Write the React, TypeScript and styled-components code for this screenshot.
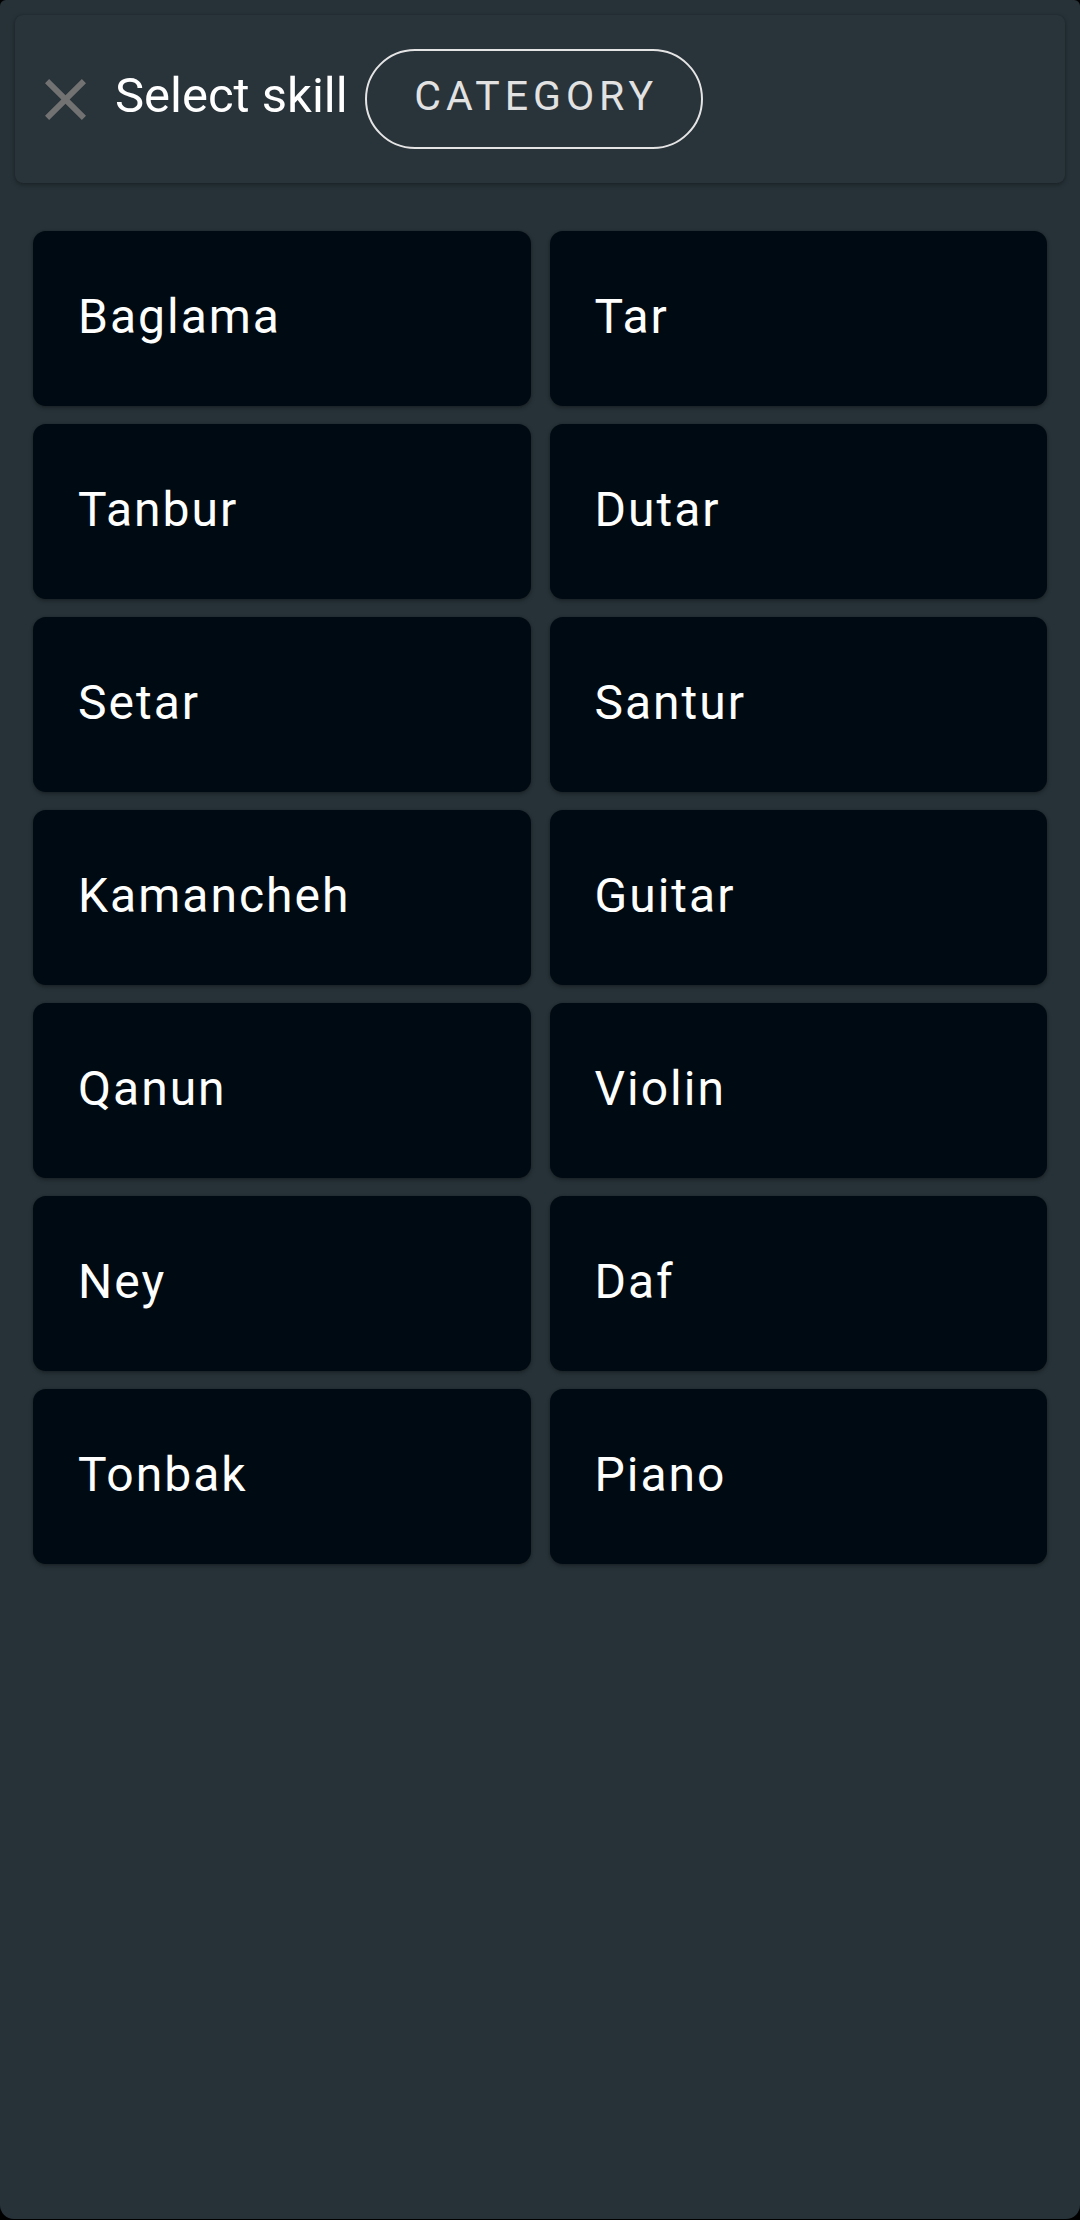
import React from "react";
import styled, { createGlobalStyle } from "styled-components";

const Global = createGlobalStyle`
  html, body { margin: 0; padding: 0; background: #000; }
  body { font-family: Roboto, "Noto Sans", "Liberation Sans", sans-serif; -webkit-font-smoothing: antialiased; }
  * { box-sizing: border-box; }
`;

const Screen = styled.div`
  width: 1080px;
  height: 2219px;
  background: #263238;
  border-radius: 6px 6px 14px 14px;
  overflow: hidden;
  display: flex;
  flex-direction: column;
`;

const Header = styled.header`
  margin: 15px 15px 0;
  height: 168px;
  background: #29333a;
  border-radius: 8px;
  box-shadow: 0 2px 5px rgba(0, 0, 0, 0.28), 0 0 2px rgba(0, 0, 0, 0.2);
  display: flex;
  align-items: center;
  padding-left: 30px;
`;

const CloseButton = styled.button`
  width: 41px;
  height: 41px;
  padding: 0;
  border: none;
  background: transparent;
  display: flex;
  align-items: center;
  justify-content: center;
  margin-right: 29px;
  cursor: pointer;
`;

const Title = styled.h1`
  margin: 0 17px 0 0;
  font-size: 49px;
  font-weight: 400;
  color: #ffffff;
  line-height: 1;
  position: relative;
  top: -4px;
`;

const CategoryButton = styled.button`
  width: 338px;
  height: 100px;
  border: 2px solid #e4e4e4;
  border-radius: 50px;
  background: transparent;
  color: #e2e2e2;
  font-family: Roboto, "Noto Sans", sans-serif;
  font-size: 41px;
  font-weight: 400;
  letter-spacing: 5px;
  display: flex;
  align-items: center;
  justify-content: center;
  padding: 0 0 6px 5px;
`;

const Grid = styled.div`
  margin: 48px 33px 0;
  display: grid;
  grid-template-columns: 1fr 1fr;
  column-gap: 19px;
  row-gap: 18px;
`;

const SkillCard = styled.button`
  height: 175px;
  background: #000a12;
  border: none;
  border-radius: 13px;
  box-shadow: 0 2px 4px rgba(0, 0, 0, 0.3), 0 0 2px rgba(0, 0, 0, 0.2);
  color: #ffffff;
  font-family: Roboto, "Noto Sans", sans-serif;
  font-size: 48px;
  font-weight: 400;
  letter-spacing: 2px;
  text-align: left;
  padding: 0 0 4px 45px;
  display: flex;
  align-items: center;
  cursor: pointer;
`;

const skills = [
  "Baglama", "Tar",
  "Tanbur", "Dutar",
  "Setar", "Santur",
  "Kamancheh", "Guitar",
  "Qanun", "Violin",
  "Ney", "Daf",
  "Tonbak", "Piano",
];

const CloseIcon = () => (
  <svg width="41" height="41" viewBox="5 5 14 14" aria-hidden="true">
    <path
      fill="#727272"
      d="M19 6.41L17.59 5 12 10.59 6.41 5 5 6.41 10.59 12 5 17.59 6.41 19 12 13.41 17.59 19 19 17.59 13.41 12z"
    />
  </svg>
);

export default function App() {
  return (
    <>
      <Global />
      <Screen>
        <Header>
          <CloseButton aria-label="Close">
            <CloseIcon />
          </CloseButton>
          <Title>Select skill</Title>
          <CategoryButton>CATEGORY</CategoryButton>
        </Header>
        <Grid>
          {skills.map((s) => (
            <SkillCard key={s}>{s}</SkillCard>
          ))}
        </Grid>
      </Screen>
    </>
  );
}
